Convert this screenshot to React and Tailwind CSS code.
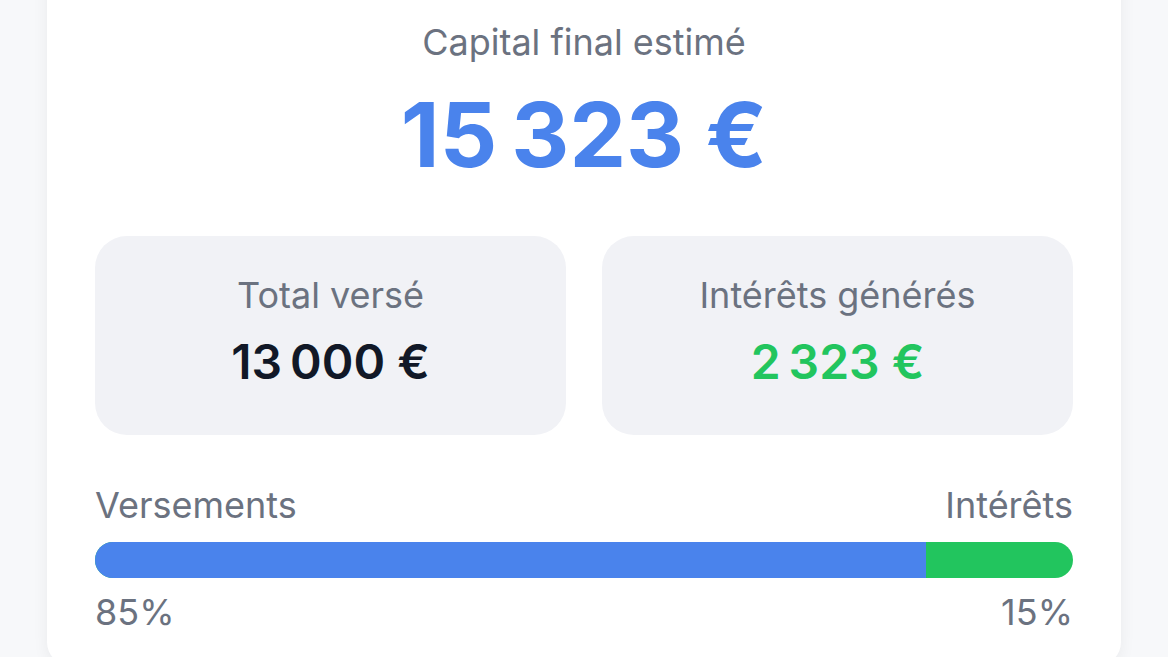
const fmt = (n) => `${n.toLocaleString('fr-FR').replace(/\s/g, '\u202f')}\u00a0€`;

const totalVerse = 13000;
const interets = 2323;
const capital = totalVerse + interets;
const partVerse = Math.round((totalVerse / capital) * 100);

function StatBox({ label, value, valueClass }) {
  return (
    <div className="rounded-[32px] bg-[#f1f2f6] pt-[37px] pb-[45px] text-center">
      <div className="text-[36px] leading-[44px] text-[#6b7280]">{label}</div>
      <div className={`mt-[17px] text-[48px] leading-[56px] font-semibold ${valueClass}`}>{value}</div>
    </div>
  );
}

export default function App() {
  return (
    <div className="min-h-screen bg-[#f7f8fa] px-[47px] overflow-hidden" style={{ fontFamily: 'Inter, "Noto Sans", sans-serif' }}>
      <div className="-mt-10 rounded-3xl bg-white px-12 pt-[60px] pb-8 shadow-[0_4px_16px_rgba(15,23,42,0.06)]">
        <div className="text-center">
          <div className="text-[36px] leading-[44px] text-[#6b7280]">Capital final estimé</div>
          <div className="mt-[26px] text-[90px] leading-[90px] font-bold text-[#4a83ec] tracking-tight">{fmt(capital)}</div>
        </div>

        <div className="mt-[56px] grid grid-cols-2 gap-9">
          <StatBox label="Total versé" value={fmt(totalVerse)} valueClass="text-[#111827]" />
          <StatBox label="Intérêts générés" value={fmt(interets)} valueClass="text-[#22c55e]" />
        </div>

        <div className="mt-[48px] flex justify-between text-[36px] leading-[44px] text-[#6b7280]">
          <span>Versements</span>
          <span>Intérêts</span>
        </div>
        <div className="mt-[15px] flex h-9 overflow-hidden rounded-full bg-[#22c55e]">
          <div className="h-full bg-[#4a83ec]" style={{ width: `${partVerse}%` }} />
        </div>
        <div className="mt-[12px] flex justify-between text-[36px] leading-[44px] text-[#6b7280]">
          <span>{partVerse}%</span>
          <span>{100 - partVerse}%</span>
        </div>
      </div>
    </div>
  );
}
